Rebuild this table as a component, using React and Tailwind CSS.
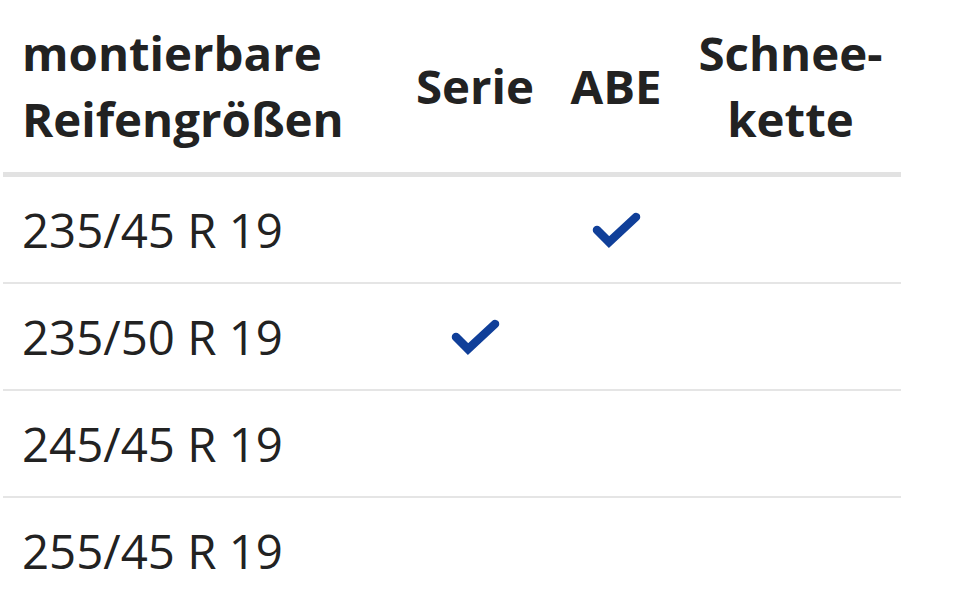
import React from "react";

const Check = () => (
  <svg width="49" height="36" viewBox="0 0 49 36" className="block">
    <polyline
      points="5,18 17,30 44,5"
      fill="none"
      stroke="#103f99"
      strokeWidth="8.5"
      strokeLinecap="round"
      strokeLinejoin="miter"
    />
  </svg>
);

const rows = [
  { size: "235/45 R 19", serie: false, abe: true },
  { size: "235/50 R 19", serie: true, abe: false },
  { size: "245/45 R 19", serie: false, abe: false },
  { size: "255/45 R 19", serie: false, abe: false },
];

export default function App() {
  return (
    <div
      className="w-[960px] h-[593px] overflow-hidden bg-white text-[#222]"
      style={{ fontFamily: '"Open Sans", sans-serif' }}
    >
      <div className="ml-[3px] w-[898px]">
        <div className="grid grid-cols-[395px_154px_128px_221px] border-b-[5px] border-[#e2e2e2] font-bold text-[47.4px] leading-[66px]">
          <div className="px-[19px] py-[20px]">
            montierbare
            <br />
            Reifengrößen
          </div>
          <div className="px-[19px] py-[20px] flex items-center justify-center">Serie</div>
          <div className="px-[19px] py-[20px] flex items-center justify-center">ABE</div>
          <div className="px-[19px] py-[20px] flex items-center justify-center text-center">
            Schnee-
            <br />
            kette
          </div>
        </div>
        {rows.map((r) => (
          <div
            key={r.size}
            className="grid grid-cols-[395px_154px_128px_221px] border-b-2 border-[#e5e5e5] text-[47.4px] leading-[65px]"
          >
            <div className="px-[19px] py-[20px]">{r.size}</div>
            <div className="py-[20px] flex items-center justify-center">{r.serie && <Check />}</div>
            <div className="py-[20px] flex items-center justify-center">{r.abe && <Check />}</div>
            <div className="py-[20px]"></div>
          </div>
        ))}
      </div>
    </div>
  );
}
